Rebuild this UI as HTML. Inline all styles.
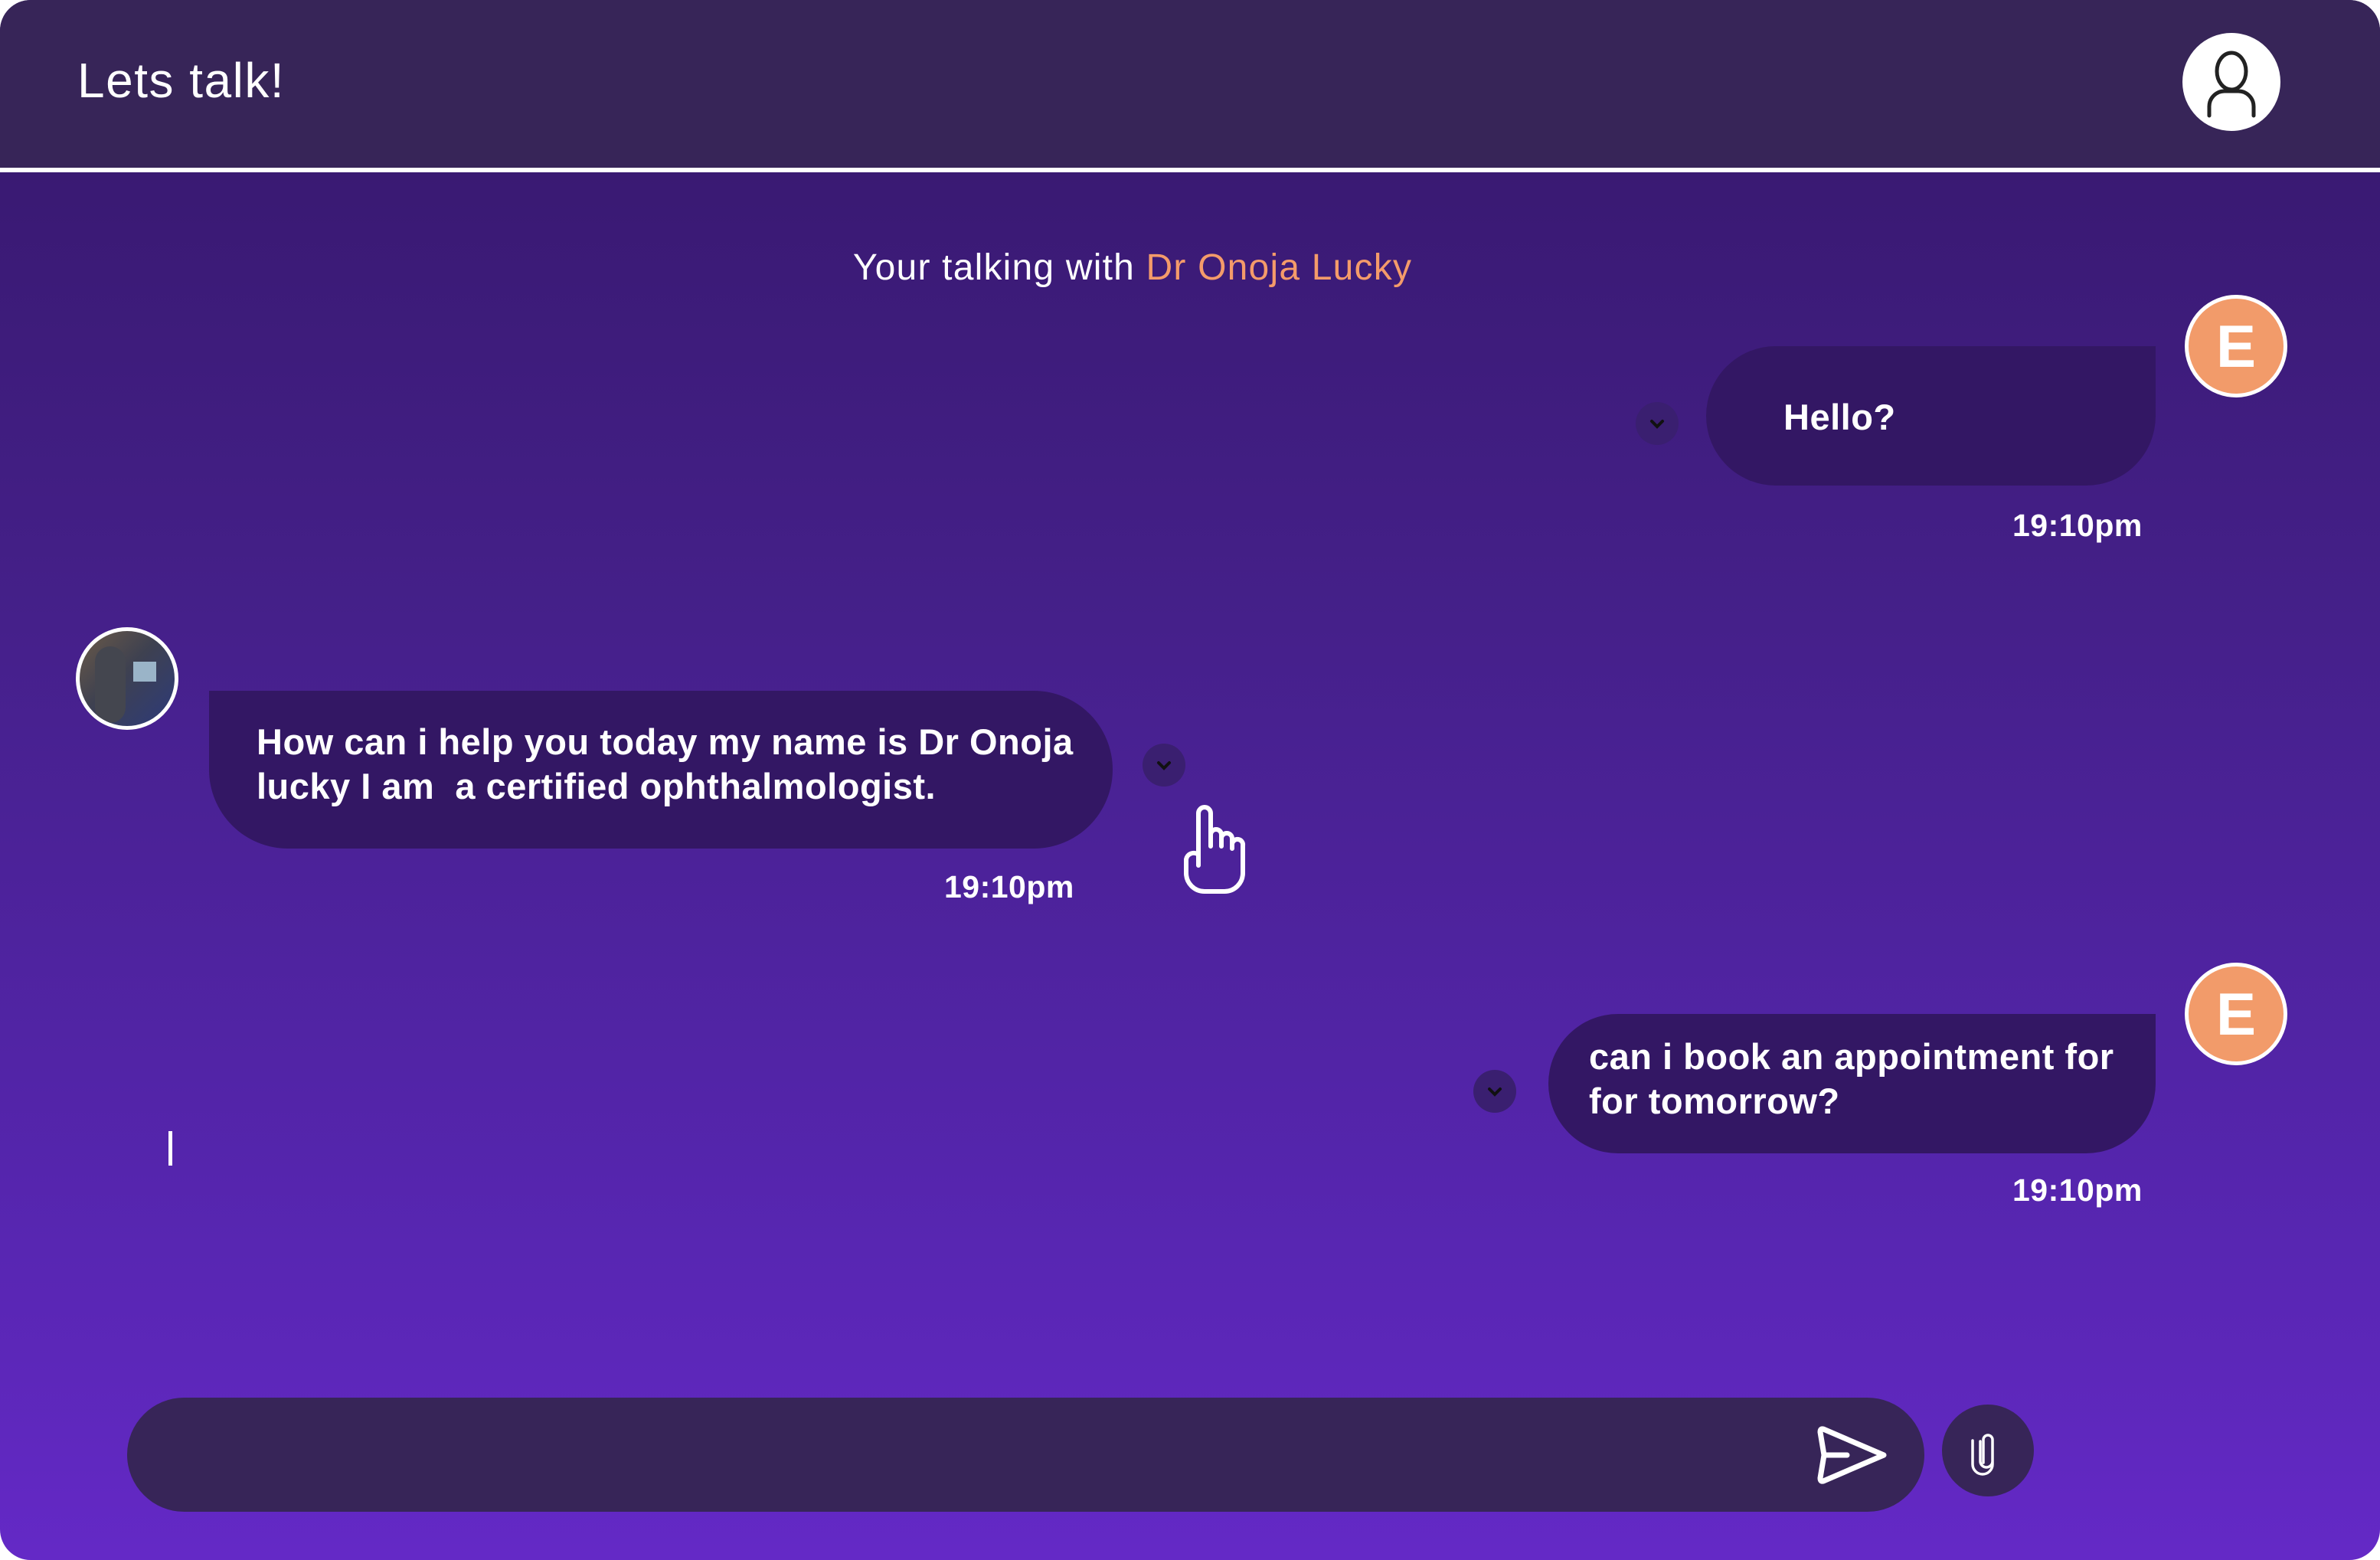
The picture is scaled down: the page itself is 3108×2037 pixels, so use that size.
<!DOCTYPE html>
<html><head><meta charset="utf-8"><style>
html,body{margin:0;padding:0;background:#fff;}
body{width:3108px;height:2037px;position:relative;overflow:hidden;font-family:"Liberation Sans",sans-serif;}
#app{position:absolute;left:0;top:0;width:3108px;height:2037px;border-radius:40px;overflow:hidden;background:linear-gradient(180deg,#35176a 0%,#45208a 40%,#5525ad 75%,#6429c6 100%);}
#hdr{position:absolute;left:0;top:0;width:3108px;height:219px;background:#372558;border-bottom:6px solid #fff;}
.abs{position:absolute;}
.t{color:#fff;font-weight:bold;font-size:47px;white-space:nowrap;letter-spacing:0.5px;}
.bub{position:absolute;background:#331764;}
.chev{position:absolute;width:56px;height:56px;border-radius:50%;background:#3a1f70;}
.av{position:absolute;width:124px;height:124px;border-radius:50%;border:5px solid #fff;background:#f29b6a;color:#fff;font-weight:bold;font-size:78px;text-align:center;line-height:124px;}
.ts{position:absolute;color:#fff;font-weight:bold;font-size:41px;letter-spacing:0.5px;}
</style></head><body><div id="app">
<div id="hdr">
 <div class="abs" style="left:101px;top:68px;font-size:64px;letter-spacing:1.5px;color:#fff;">Lets talk!</div>
 <div class="abs" style="left:2850px;top:43px;width:128px;height:128px;border-radius:50%;background:#fff;">
  <svg width="128" height="128" viewBox="0 0 128 128"><ellipse cx="64" cy="50" rx="19" ry="24" fill="none" stroke="#222" stroke-width="5"/><path d="M35 108 V96 a20 20 0 0 1 20 -20 H73 a20 20 0 0 1 20 20 V108" fill="none" stroke="#222" stroke-width="5" stroke-linecap="round"/></svg>
 </div>
</div>

<div class="abs" style="left:0;width:2958px;text-align:center;top:322px;font-size:48px;letter-spacing:1.2px;color:#fff;">Your talking with <span style="color:#f49b6a">Dr Onoja Lucky</span></div>

<div class="av" style="left:2853px;top:385px;">E</div>
<div class="bub" style="left:2228px;top:452px;width:587px;height:182px;border-radius:91px 0 91px 91px;"></div>
<div class="t abs" style="left:2329px;top:517px;">Hello?</div>
<div class="chev" style="left:2136px;top:525px;"><svg width="56" height="56"><path d="M21 25 L28 32 L35 25" fill="none" stroke="#111" stroke-width="4" stroke-linecap="round"/></svg></div>
<div class="ts" style="left:2628px;top:663px;">19:10pm</div>

<div class="abs" style="left:99px;top:819px;width:124px;height:124px;border-radius:50%;border:5px solid #fff;overflow:hidden;background:linear-gradient(135deg,#6b5a48 0%,#3e4150 45%,#2d3a7a 100%);">
 <div class="abs" style="left:20px;top:20px;width:40px;height:100px;background:#44464f;border-radius:20px;"></div>
 <div class="abs" style="left:70px;top:40px;width:30px;height:26px;background:#9ab4c8;"></div>
</div>
<div class="bub" style="left:273px;top:902px;width:1180px;height:206px;border-radius:0 103px 103px 103px;"></div>
<div class="t abs" style="left:335px;top:940px;line-height:58px;">How can i help you today my name is Dr Onoja<br>lucky I am&nbsp; a certified ophthalmologist.</div>
<div class="chev" style="left:1492px;top:971px;"><svg width="56" height="56"><path d="M21 25 L28 32 L35 25" fill="none" stroke="#111" stroke-width="4" stroke-linecap="round"/></svg></div>
<div class="ts" style="left:1233px;top:1135px;">19:10pm</div>
<svg class="abs" style="left:1535px;top:1050px;" width="95" height="120" viewBox="0 0 95 120"><path d="M30 70 V12 a8 8 0 0 1 16 0 V55 M46 40 a7 7 0 0 1 14 0 V55 M60 45 a7 7 0 0 1 14 0 V58 M74 52 a7 7 0 0 1 14 2 V90 a24 24 0 0 1 -24 24 H38 a24 24 0 0 1 -24 -24 V72 a10 10 0 0 1 16 -6 V80" fill="none" stroke="#fff" stroke-width="6" stroke-linecap="round" stroke-linejoin="round"/></svg>

<div class="av" style="left:2853px;top:1257px;">E</div>
<div class="bub" style="left:2022px;top:1324px;width:793px;height:182px;border-radius:91px 0 91px 91px;"></div>
<div class="t abs" style="left:2075px;top:1351px;line-height:58px;">can i book an appointment for<br>for tomorrow?</div>
<div class="chev" style="left:1924px;top:1397px;"><svg width="56" height="56"><path d="M21 25 L28 32 L35 25" fill="none" stroke="#111" stroke-width="4" stroke-linecap="round"/></svg></div>
<div class="ts" style="left:2628px;top:1531px;">19:10pm</div>

<div class="abs" style="left:220px;top:1477px;width:5px;height:45px;background:#fff;"></div>

<div class="abs" style="left:166px;top:1825px;width:2347px;height:149px;border-radius:75px;background:#372558;"></div>
<svg class="abs" style="left:2372px;top:1858px;" width="100" height="84" viewBox="0 0 100 84"><path d="M9 8 L88 42 L9 76 Q5 77 5 72 L10 42 L5 12 Q5 7 9 8 Z M10 42 H40" fill="none" stroke="#fff" stroke-width="7" stroke-linejoin="round" stroke-linecap="round"/></svg>
<div class="abs" style="left:2536px;top:1834px;width:120px;height:120px;border-radius:50%;background:#372558;">
 <svg width="120" height="120" viewBox="0 0 120 120"><path d="M54 76 V46 a6 6 0 0 1 12 0 V74 a8 8 0 0 1 -16 0 V48 M66 48 V78 a13 13 0 0 1 -26 0 V47" fill="none" stroke="#fff" stroke-width="3.5" stroke-linecap="round"/></svg>
</div>
</div></body></html>
